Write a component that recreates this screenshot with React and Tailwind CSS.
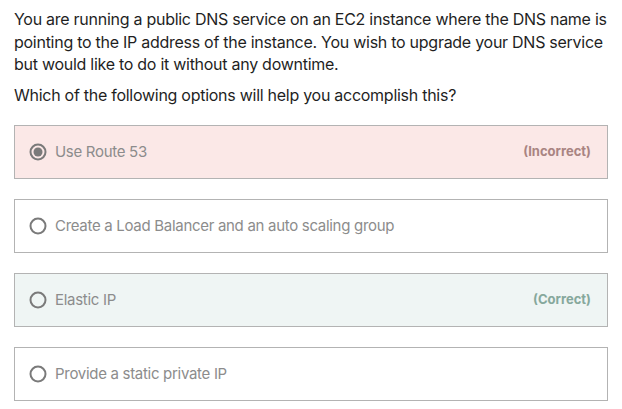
import React from 'react';

const options = [
  { text: 'Use Route 53', selected: true, status: 'incorrect' },
  { text: 'Create a Load Balancer and an auto scaling group' },
  { text: 'Elastic IP', status: 'correct' },
  { text: 'Provide a static private IP' },
];

function Radio({ checked }) {
  return (
    <svg width="18" height="18" viewBox="0 0 18 18" className="shrink-0">
      <circle cx="9" cy="9" r="7.5" fill="none" stroke="#7a7a7a" strokeWidth="2" />
      {checked && <circle cx="9" cy="9" r="4.5" fill="#7a7a7a" />}
    </svg>
  );
}

export default function App() {
  return (
    <div className="w-[622px] h-[409px] bg-white px-[14px] pt-[8px] font-['Inter','Liberation_Sans',sans-serif] text-[#1f1f1f]">
      <p className="text-[16px] leading-[22.5px] tracking-[-0.27px]">
        You are running a public DNS service on an EC2 instance where the DNS name is pointing to the IP address of the instance. You wish to upgrade your DNS service but would like to do it without any downtime.
      </p>
      <p className="mt-[8px] text-[16px] leading-[22.5px] tracking-[-0.27px]">
        Which of the following options will help you accomplish this?
      </p>
      <div className="mt-[19px] flex flex-col gap-[20px] w-[594px]">
        {options.map((o) => (
          <div
            key={o.text}
            className={
              'h-[54px] flex items-center border border-[#b3b3b3] pl-[14px] pr-[16px] ' +
              (o.status === 'incorrect'
                ? 'bg-[#fbe8e7]'
                : o.status === 'correct'
                ? 'bg-[#eff5f4]'
                : 'bg-white')
            }
          >
            <Radio checked={o.selected} />
            <span className="ml-[8px] text-[15px] tracking-[-0.3px] text-[#8c8c8c]">{o.text}</span>
            {o.status === 'incorrect' && (
              <span className="ml-auto text-[13px] font-bold text-[#a98482]">(Incorrect)</span>
            )}
            {o.status === 'correct' && (
              <span className="ml-auto text-[13px] font-bold text-[#86a89c]">(Correct)</span>
            )}
          </div>
        ))}
      </div>
    </div>
  );
}
